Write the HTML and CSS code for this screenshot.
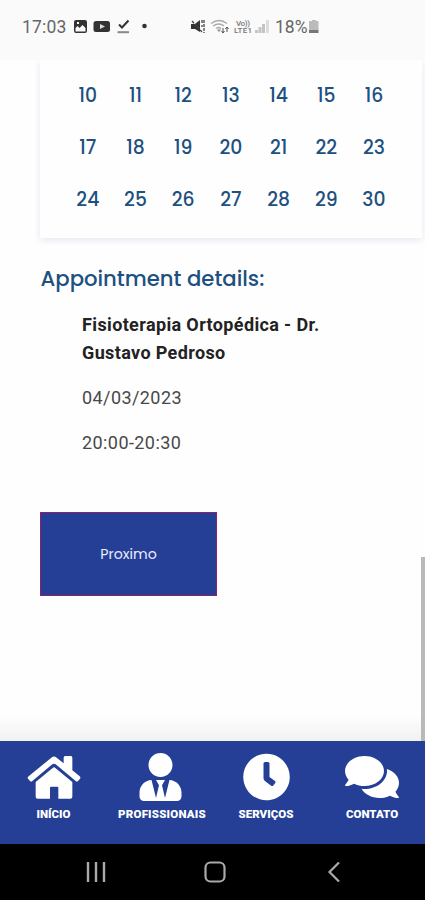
FILE: index.html
```html
<!DOCTYPE html>
<html lang="pt-BR">
<head>
<meta charset="utf-8">
<meta name="viewport" content="width=device-width, initial-scale=1">
<title>Agendamento</title>
<link rel="stylesheet" href="styles.css">
</head>
<body>
<div class="screen">
  <header class="status">
    <span class="time">17:03</span>
    <svg class="notices" width="76" height="16" viewBox="0 0 76 16">
      <path fill="#333" fill-rule="evenodd" d="M3 1h9a2 2 0 0 1 2 2v9a2 2 0 0 1-2 2H3a2 2 0 0 1-2-2V3a2 2 0 0 1 2-2zM2.500 9v3.500h10V9L9.500 6l-3 3-2-2zM4 3v2h2V3z"/>
      <rect x="20.500" y="2" width="16.500" height="11" rx="2.500" fill="#333"/><path d="M27 5l5 2.500-5 2.500z" fill="#ddd"/>
      <path d="M46 5.500l3 3L55.500 1.500" fill="none" stroke="#333" stroke-width="2"/><path d="M44.500 13.200h11.500" stroke="#888" stroke-width="2"/>
      <circle cx="71.500" cy="7" r="2.300" fill="#333"/>
    </svg>
    <svg class="signals" width="80" height="16" viewBox="0 0 80 16">
      <path d="M1 5h4l5-4v12L5 10H1z" fill="#333"/><path d="M2 2l10 11M12 1v3M12 6v2M14 1v13" stroke="#444" stroke-width="1.300" stroke-dasharray="3 1" fill="none"/>
      <g fill="none" stroke="#aaa" stroke-width="1.500"><path d="M21 4.500q8-6 16 0M23 7q6-4 11 0M26 9.500q3-2 5 0"/></g><path d="M27 11l2-1 2 1-2 2z" fill="#999"/><path d="M33 9v5M31.500 12l1.500 2 1.500-2M37 13V8M35.500 10L37 8l1.500 2" stroke="#555" fill="none"/>
      <text x="46" y="6.500" class="net" textLength="14">Vo))</text><text x="44" y="14" class="net" textLength="18">LTE1</text>
      <g fill="#c4c4c4"><path d="M65 11h3v3h-3zM68.500 8h3v6h-3zM72 5h3v9h-3z"/><path d="M76 1h3v13h-3z" fill="#ddd"/></g>
    </svg>
    <span class="percent">18%</span>
    <svg width="12" height="16" viewBox="0 0 12 16"><path d="M4 1h4v1h2.500v9H1V2h3z" fill="#bbb"/><path d="M1 11h9.500v3H1z" fill="#777"/></svg>
  </header>
  <main class="content">
    <section class="calendar">
      <span>10</span><span>11</span><span>12</span><span>13</span><span>14</span><span>15</span><span>16</span>
      <span>17</span><span>18</span><span>19</span><span>20</span><span>21</span><span>22</span><span>23</span>
      <span>24</span><span>25</span><span>26</span><span>27</span><span>28</span><span>29</span><span>30</span>
    </section>
    <h2 class="heading">Appointment details:</h2>
    <div class="details">
      <p class="service">Fisioterapia Ortopédica - Dr.<br>Gustavo Pedroso</p>
      <p>04/03/2023</p>
      <p>20:00-20:30</p>
    </div>
    <button class="next">Proximo</button>
    <div class="scrollbar"></div>
  </main>
  <nav class="tabs">
    <a class="tab"><svg width="54" height="48" viewBox="0 0 162 144"><path fill="#fff" d="M5 70L73 14q8-7 16 0l21 17V14q0-5 5-5h17q4 0 4 5v38l22 18q4 4 1 7l-6 7q-3 3-7 0L86 34q-5-4-10 0L16 84q-4 3-7 0l-6-7q-3-3 2-7zM26 87l51-42q4-4 8 0l51 42v44q0 6-6 6H94v-33q0-3-3-3H72q-3 0-3 3v33H32q-6 0-6-6z"/></svg><span>INÍCIO</span></a>
    <a class="tab"><svg width="43" height="49" viewBox="0 0 448 512"><path fill="#fff" d="M224 256c70.700 0 128-57.300 128-128S294.700 0 224 0 96 57.300 96 128s57.300 128 128 128zm95.800 32.600L272 480l-32-136 32-56h-96l32 56-32 136-47.800-191.400C56.900 292 0 350.300 0 422.400V464c0 26.500 21.500 48 48 48h352c26.500 0 48-21.500 48-48v-41.600c0-72.100-56.900-130.400-128.200-133.800z"/></svg><span class="wide">PROFISSIONAIS</span></a>
    <a class="tab"><svg width="49" height="49" viewBox="0 0 512 512"><path fill="#fff" d="M256 8C119 8 8 119 8 256s111 248 248 248 248-111 248-248S393 8 256 8zm92.500 313l-20 25a16 16 0 0 1-22.500 2.500l-67-49.700a40 40 0 0 1-15-31.300V112a16 16 0 0 1 16-16h32a16 16 0 0 1 16 16v144l58 42.500a16 16 0 0 1 2.500 22.500z"/></svg><span>SERVIÇOS</span></a>
    <a class="tab"><svg width="54" height="48" viewBox="0 0 576 512"><path fill="#fff" d="M416 192c0-88.400-93.100-160-208-160S0 103.600 0 192c0 34.300 14.100 65.900 38 92-13.400 30.200-35.500 54.200-35.800 54.500-2.200 2.300-2.800 5.700-1.500 8.700S4.800 352 8 352c36.600 0 66.900-12.300 88.700-25 32.200 15.700 70.300 25 111.300 25 114.900 0 208-71.600 208-160zm122 220c23.900-26 38-57.700 38-92 0-66.900-53.500-124.200-129.300-148.100.9 6.600 1.300 13.300 1.300 20.100 0 105.900-107.700 192-240 192-10.800 0-21.300-.8-31.700-1.900C207.800 439.600 281.800 480 368 480c41 0 79.100-9.200 111.300-25 21.800 12.700 52.100 25 88.700 25 3.200 0 6.100-1.900 7.300-4.800 1.300-2.900.7-6.300-1.500-8.700-.3-.2-22.400-24.200-35.800-54.500z"/></svg><span>CONTATO</span></a>
  </nav>
  <footer class="system">
    <svg width="22" height="22" viewBox="0 0 22 22"><path d="M3 1v20M11 1v20M19 1v20" stroke="#aaa" stroke-width="2.400"/></svg>
    <svg width="22" height="22" viewBox="0 0 22 22"><rect x="1.500" y="1.500" width="19" height="19" rx="5" fill="none" stroke="#aaa" stroke-width="2.200"/></svg>
    <svg width="22" height="22" viewBox="0 0 22 22"><path d="M16 1.500L6.500 11 16 20.500" fill="none" stroke="#aaa" stroke-width="2.200"/></svg>
  </footer>
</div>
</body>
</html>
```
FILE: styles.css
```css
* { box-sizing: border-box; }
body { margin: 0; background: #fefefe; font-family: Roboto, sans-serif; }
p, h2 { margin: 0; }
.screen { width: 425px; height: 900px; display: flex; flex-direction: column; overflow: hidden; }
.status { height: 60px; background: #fafafa; display: flex; align-items: flex-start; padding: 19px 0 0 22px; color: #666; font-size: 17.5px; line-height: 16px; }
.time { width: 51px; letter-spacing: .2px; }
.signals { margin-left: 41px; }
.net { font: 500 8px Roboto, sans-serif; fill: #777; }
.percent { width: 33px; margin-left: 5px; }
.content { height: 681px; position: relative; padding-left: 40px; background: linear-gradient(#fefefe 655px, #f1f1f1); }
.calendar { width: 382px; height: 178px; padding: 10px 24px 0; display: grid; grid-template-columns: repeat(7, 47.7px); grid-auto-rows: 52px; align-items: center; text-align: center; font: 500 18.8px/52px Poppins, Inter, sans-serif; color: #20507f; box-shadow: 0 2px 7px #e3e8f1; clip-path: inset(0 -8px -12px -8px); }
.heading { margin-top: 24px; padding-left: .5px; font: 500 21.2px/34px Poppins, Inter, sans-serif; color: #20507f; }
.details { padding: 15px 0 0 42px; font-size: 18px; line-height: 28.4px; letter-spacing: .42px; color: #484848; }
.details p + p { margin-top: 16.3px; }
.details .service { font-weight: 700; letter-spacing: .37px; color: #222; }
.next { display: block; width: 177px; height: 84px; margin-top: 55px; padding: 0; border: 1px solid #8c206f; background: #263f96; color: #e8edff; font: 400 14.2px/20px Poppins, Inter, sans-serif; }
.scrollbar { position: absolute; right: 0; top: 497px; width: 4px; height: 184px; background: #b9b9b9; }
.tabs { height: 103px; padding-top: 12px; background: #263f96; display: grid; grid-template-columns: 107px 107px 104px 108px; }
.tab { display: flex; flex-direction: column; align-items: center; color: #fff; }
.tab svg { flex: none; height: 48px; }
.tab span { margin-top: 6px; font: 900 11.5px/14px Roboto, sans-serif; white-space: nowrap; }
.tab .wide { padding-left: 3px; letter-spacing: .2px; }
.system { height: 56px; background: #000; display: flex; align-items: center; padding-left: 85px; gap: 97px; }
```
